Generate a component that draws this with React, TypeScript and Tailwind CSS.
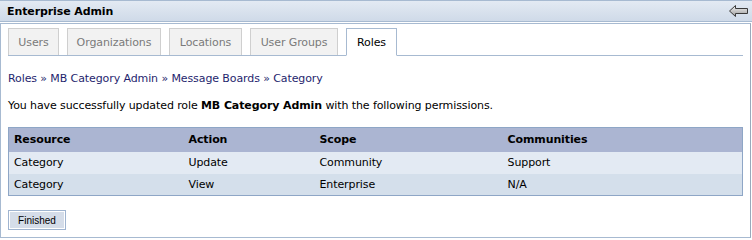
import React from "react";

const tabs = [
  { label: "Users", width: "w-[51px]" },
  { label: "Organizations", width: "w-[94px]" },
  { label: "Locations", width: "w-[73px]" },
  { label: "User Groups", width: "w-[88px]" },
  { label: "Roles", width: "w-[51px]" },
];

const rows = [
  { resource: "Category", action: "Update", scope: "Community", communities: "Support" },
  { resource: "Category", action: "View", scope: "Enterprise", communities: "N/A" },
];

const BackArrow = () => (
  <svg width="19" height="12" viewBox="0 0 19 12">
    <defs>
      <linearGradient id="arrowFill" x1="0" y1="0" x2="0" y2="1">
        <stop offset="0" stopColor="#f4f4f4" />
        <stop offset="1" stopColor="#9a9a9a" />
      </linearGradient>
    </defs>
    <path
      d="M0.5 6 L6.5 0.5 L6.5 3.5 L18.5 3.5 L18.5 8.5 L6.5 8.5 L6.5 11.5 Z"
      fill="url(#arrowFill)"
      stroke="#3a3a3a"
      strokeWidth="1"
      strokeLinejoin="round"
    />
  </svg>
);

export default function App() {
  return (
    <div className="w-[752px] h-[240px] bg-white text-[11px] leading-[15px] text-black tracking-[-0.1px] font-['DejaVu_Sans',sans-serif]">
      <div className="h-[22px] flex items-center justify-between pl-[7px] pr-[4px] border-t border-b border-[#a7bad1] bg-gradient-to-b from-[#e3eaf3] to-[#cfdae8]">
        <span className="font-bold text-[11px]">Enterprise Admin</span>
        <BackArrow />
      </div>

      <div className="mt-px mr-px h-[215px] border border-[#a7bad1] border-r-[#9aa9bb] px-[7px]">
        <div className="mt-[4px] flex gap-[8px] border-b border-[#a7bad1] h-[28px]">
          {tabs.map(tab =>
            tab.label === "Roles" ? (
              <div
                key={tab.label}
                className={`${tab.width} h-[28px] flex items-center justify-center bg-white border border-[#a7bad1] border-b-white text-black`}
              >
                {tab.label}
              </div>
            ) : (
              <div
                key={tab.label}
                className={`${tab.width} h-[27px] flex items-center justify-center bg-[#f2f2f2] border border-[#cfcfcf] border-b-0 text-[#7a7a7a]`}
              >
                {tab.label}
              </div>
            ),
          )}
        </div>

        <div className="mt-[15px] text-[#1f1f6e]">
          Roles » MB Category Admin » Message Boards » Category
        </div>

        <div className="mt-[12px]">
          You have successfully updated role <b>MB Category Admin</b> with the following permissions.
        </div>

        <table className="mt-[14px] w-full border border-[#8ea6c6] border-collapse">
          <thead>
            <tr className="h-[24px] bg-[#abb5d2] text-left">
              <th className="pl-[5px] w-[180px] font-bold">Resource</th>
              <th className="w-[131px] font-bold">Action</th>
              <th className="w-[188px] font-bold">Scope</th>
              <th className="font-bold">Communities</th>
            </tr>
          </thead>
          <tbody>
            {rows.map((r, i) => (
              <tr key={i} className={i === 0 ? "h-[22px] bg-[#e3eaf3]" : "h-[22px] bg-[#d4dfeb]"}>
                <td className="pl-[5px]">{r.resource}</td>
                <td>{r.action}</td>
                <td>{r.scope}</td>
                <td>{r.communities}</td>
              </tr>
            ))}
          </tbody>
        </table>

        <button className="mt-[14px] h-[20px] w-[58px] border border-[#9fb4d0] bg-[#d5dde9] shadow-[inset_0_0_0_1px_#ffffff] text-[10px] tracking-normal font-['Liberation_Sans',sans-serif]">
          Finished
        </button>
      </div>
    </div>
  );
}
